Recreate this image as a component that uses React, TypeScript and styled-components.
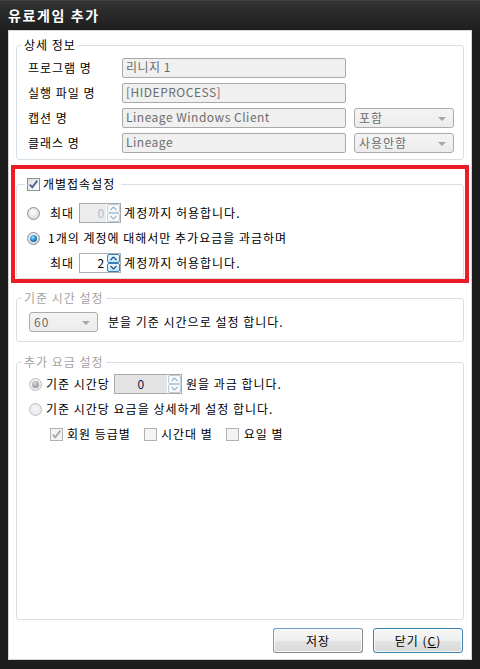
import React from "react";
import styled, { createGlobalStyle, css } from "styled-components";

const FONT = `"Noto Sans CJK KR", "Liberation Sans", sans-serif`;

const GlobalStyle = createGlobalStyle`
  * { box-sizing: border-box; }
  html, body { margin: 0; padding: 0; background: #1d1d1d; }
  body { font-family: ${FONT}; font-size: 12px; color: #000; letter-spacing: 1px; }
`;

const Window = styled.div`
  width: 480px;
  height: 669px;
  display: flex;
  flex-direction: column;
  background: #1d1d1d;
`;

const TitleBar = styled.div`
  flex: none;
  height: 30px;
  display: flex;
  align-items: center;
  padding-left: 8px;
  background: linear-gradient(#505050 0, #353535 1px, #2a2a2a 40%, #1e1e1e 100%);
  color: #fff;
  font-size: 14px;
  font-weight: bold;
  line-height: 16px;
  letter-spacing: 1.6px;
`;

const Client = styled.div`
  flex: 1;
  margin: 0 8px 9px;
  background: #fff;
  border: 1px solid #d4d4d4;
  display: flex;
  flex-direction: column;
`;

const Group = styled.fieldset<{ $mt?: number; $mx?: number; $grow?: boolean }>`
  margin: ${(p) => p.$mt ?? 0}px ${(p) => p.$mx ?? 7}px 0;
  padding: 0;
  min-width: 0;
  border: 1px solid #d5dfe5;
  border-radius: 3px;
  ${(p) =>
    p.$grow &&
    css`
      flex: 1;
    `}
`;

const Legend = styled.legend<{ $ml?: number; $disabled?: boolean }>`
  margin-left: ${(p) => p.$ml ?? 5}px;
  padding: 0 2px 0 2px;
  height: 14px;
  line-height: 14px;
  font-size: 12px;
  color: ${(p) => (p.$disabled ? "#a3a3a3" : "#000")};
`;

const LegendInner = styled.span`
  display: inline-flex;
  align-items: center;
  gap: 3px;
  height: 14px;
  padding-right: 4px;
`;

const Body = styled.div<{ $pt: number; $pb: number; $pl: number }>`
  padding: ${(p) => p.$pt}px 8px ${(p) => p.$pb}px ${(p) => p.$pl}px;
  display: flex;
  flex-direction: column;
  gap: 5px;
`;

const FormGrid = styled.div`
  padding: 6px 0 6px 11px;
  display: grid;
  grid-template-columns: 86px 224px 100px;
  grid-auto-rows: 20px;
  column-gap: 8px;
  row-gap: 5px;
`;

const Label = styled.div`
  line-height: 20px;
  white-space: nowrap;
`;

const TextBox = styled.div`
  height: 20px;
  border: 1px solid #a9a9a9;
  border-radius: 2px;
  background: #f0f0f0;
  color: #6d6d6d;
  padding: 0 3px;
  line-height: 16px;
  letter-spacing: 0.5px;
  white-space: nowrap;
  overflow: hidden;
`;

const Combo = styled.div<{ $w?: number }>`
  width: ${(p) => (p.$w ? `${p.$w}px` : "auto")};
  height: 20px;
  border: 1px solid #acacac;
  border-radius: 3px;
  background: linear-gradient(#f4f4f4, #ececec);
  color: #6d6d6d;
  display: flex;
  align-items: center;
  justify-content: space-between;
  padding: 0 7px 0 4px;
  line-height: 16px;
  flex: none;
`;

const Arrow = styled.span`
  width: 0;
  height: 0;
  border-left: 4px solid transparent;
  border-right: 4px solid transparent;
  border-top: 4px solid #a6a6a6;
  margin-top: 2px;
`;

const RedFrame = styled.div`
  margin: 5px 2px 0;
  border: 4px solid #ed1c24;
  padding: 8px 1px 0;
`;

const Row = styled.div<{ $indent?: number }>`
  display: flex;
  align-items: center;
  height: 20px;
  padding-left: ${(p) => p.$indent ?? 0}px;
  white-space: nowrap;
`;

const Text = styled.span<{ $ml?: number; $mr?: number }>`
  margin-left: ${(p) => p.$ml ?? 0}px;
  margin-right: ${(p) => p.$mr ?? 0}px;
  line-height: 14px;
`;

const Radio = styled.span<{ $checked?: boolean; $disabled?: boolean }>`
  flex: none;
  position: relative;
  width: 13px;
  height: 13px;
  border-radius: 50%;
  border: 1px solid ${(p) => (p.$disabled ? "#c0c0c0" : "#8e8f8f")};
  background: ${(p) =>
    p.$disabled
      ? "radial-gradient(circle at 50% 45%, #f6f6f6 0, #e4e4e4 100%)"
      : "radial-gradient(circle at 45% 40%, #ffffff 0, #eeeeee 35%, #c9c9c9 100%)"};
  ${(p) =>
    p.$checked &&
    css`
      &::after {
        content: "";
        position: absolute;
        left: 2px;
        top: 2px;
        width: 7px;
        height: 7px;
        border-radius: 50%;
        background: ${p.$disabled
          ? "radial-gradient(circle at 40% 35%, #d8d8d8 0, #9a9a9a 70%, #7a7a7a 100%)"
          : "radial-gradient(circle at 40% 35%, #9be6ff 0, #2a8ad4 45%, #0b3d73 100%)"};
      }
    `}
`;

const CheckBoxBox = styled.span<{ $disabled?: boolean }>`
  flex: none;
  width: 13px;
  height: 13px;
  border: 1px solid ${(p) => (p.$disabled ? "#b1b1b1" : "#8e8f8f")};
  background: ${(p) =>
    p.$disabled ? "#f4f4f4" : "linear-gradient(135deg, #dcdcdc, #ffffff)"};
  display: flex;
  align-items: center;
  justify-content: center;
`;

const CheckBox = ({ checked, disabled }: { checked?: boolean; disabled?: boolean }) => (
  <CheckBoxBox $disabled={disabled}>
    {checked && (
      <svg width="11" height="11" viewBox="0 0 11 11">
        <path
          d="M1.8 5.6 L4.3 8.3 L9.3 1.6"
          fill="none"
          stroke={disabled ? "#a8a8a8" : "#4a5f97"}
          strokeWidth="1.8"
        />
      </svg>
    )}
  </CheckBoxBox>
);

const SpinBox = styled.div<{ $w: number; $tone: "off" | "on" | "grey" }>`
  flex: none;
  width: ${(p) => p.$w}px;
  height: 20px;
  display: flex;
  border: 1px solid ${(p) => (p.$tone === "on" ? "#abadb3" : "#a9a9a9")};
  background: ${(p) => (p.$tone === "on" ? "#fff" : p.$tone === "grey" ? "#e3e3e3" : "#ececec")};
`;

const SpinValue = styled.div<{ $color: string; $center?: boolean }>`
  flex: 1;
  color: ${(p) => p.$color};
  line-height: 18px;
  letter-spacing: 0;
  text-align: ${(p) => (p.$center ? "center" : "right")};
  padding-right: ${(p) => (p.$center ? 0 : 2)}px;
`;

const SpinButtons = styled.div`
  width: 14px;
  display: flex;
  flex-direction: column;
  padding: 0 0 0 1px;
  background: #fff;
`;

const SpinBtn = styled.div<{ $on?: boolean }>`
  flex: 1;
  border: 1px solid ${(p) => (p.$on ? "#3c7fb1" : "#b7cde2")};
  border-radius: 2px;
  background: ${(p) => (p.$on ? "linear-gradient(#eaf6fd, #bee6fd)" : "#f7f9fb")};
  display: flex;
  align-items: center;
  justify-content: center;
`;

const Chevron = ({ up, color }: { up?: boolean; color: string }) => (
  <svg width="7" height="5" viewBox="0 0 7 5">
    <path
      d={up ? "M0.5 4 L3.5 1 L6.5 4" : "M0.5 1 L3.5 4 L6.5 1"}
      fill="none"
      stroke={color}
      strokeWidth="1.2"
    />
  </svg>
);

const Spinner = ({
  w,
  value,
  tone,
  valueColor,
  center,
}: {
  w: number;
  value: string;
  tone: "off" | "on" | "grey";
  valueColor: string;
  center?: boolean;
}) => (
  <SpinBox $w={w} $tone={tone}>
    <SpinValue $color={valueColor} $center={center}>
      {value}
    </SpinValue>
    <SpinButtons>
      <SpinBtn $on={tone === "on"}>
        <Chevron up color={tone === "on" ? "#1c5180" : "#9fb6cc"} />
      </SpinBtn>
      <SpinBtn $on={tone === "on"}>
        <Chevron color={tone === "on" ? "#1c5180" : "#9fb6cc"} />
      </SpinBtn>
    </SpinButtons>
  </SpinBox>
);

const ButtonBar = styled.div`
  display: flex;
  justify-content: flex-end;
  gap: 10px;
  margin: 8px 0 6px;
  padding-right: 8px;
`;

const Button = styled.button<{ $default?: boolean }>`
  width: 90px;
  height: 25px;
  padding: 0;
  border: 1px solid;
  border-color: ${(p) =>
    p.$default ? "#3c7fb1" : "#6f9cc6 #8a8a8a #8a8a8a #6f9cc6"};
  border-radius: 3px;
  background: linear-gradient(#f6f6f6 0%, #efefef 50%, #e3e3e3 51%, #d9d9d9 100%);
  box-shadow: inset 0 0 0 1px rgba(255, 255, 255, 0.8);
  font-family: ${FONT};
  font-size: 12px;
  letter-spacing: 1px;
  color: #000;
  line-height: 14px;
`;

export default function App() {
  return (
    <>
      <GlobalStyle />
      <Window>
        <TitleBar>유료게임 추가</TitleBar>
        <Client>
          <Group $mt={7}>
            <Legend>상세 정보</Legend>
            <FormGrid>
              <Label>프로그램 명</Label>
              <TextBox>리니지 1</TextBox>
              <span />
              <Label>실행 파일 명</Label>
              <TextBox>[HIDEPROCESS]</TextBox>
              <span />
              <Label>캡션 명</Label>
              <TextBox>Lineage Windows Client</TextBox>
              <Combo>
                포함
                <Arrow />
              </Combo>
              <Label>클래스 명</Label>
              <TextBox>Lineage</TextBox>
              <Combo>
                사용안함
                <Arrow />
              </Combo>
            </FormGrid>
          </Group>

          <RedFrame>
            <Group $mx={0}>
              <Legend $ml={8}>
                <LegendInner>
                  <CheckBox checked />
                  개별접속설정
                </LegendInner>
              </Legend>
              <Body $pt={12} $pb={5} $pl={10}>
                <Row>
                  <Radio />
                  <Text $ml={10} $mr={5}>
                    최대
                  </Text>
                  <Spinner w={42} value="0" tone="off" valueColor="#a9bdd0" />
                  <Text $ml={3}>계정까지 허용합니다.</Text>
                </Row>
                <Row>
                  <Radio $checked />
                  <Text $ml={8}>1개의 계정에 대해서만 추가요금을 과금하며</Text>
                </Row>
                <Row $indent={23}>
                  <Text $mr={5}>최대</Text>
                  <Spinner w={42} value="2" tone="on" valueColor="#000" />
                  <Text $ml={3}>계정까지 허용합니다.</Text>
                </Row>
              </Body>
            </Group>
          </RedFrame>

          <Group $mt={8}>
            <Legend $disabled>기준 시간 설정</Legend>
            <Body $pt={7} $pb={9} $pl={12}>
              <Row>
                <Combo $w={69}>
                  60
                  <Arrow />
                </Combo>
                <Text $ml={10}>분을 기준 시간으로 설정 합니다.</Text>
              </Row>
            </Body>
          </Group>

          <Group $mt={13} $grow>
            <Legend $disabled>추가 요금 설정</Legend>
            <Body $pt={5} $pb={9} $pl={12}>
              <Row>
                <Radio $checked $disabled />
                <Text $ml={4} $mr={4}>
                  기준 시간당
                </Text>
                <Spinner w={68} value="0" tone="grey" valueColor="#0a1a4a" center />
                <Text $ml={4}>원을 과금 합니다.</Text>
              </Row>
              <Row>
                <Radio $disabled />
                <Text $ml={4}>기준 시간당 요금을 상세하게 설정 합니다.</Text>
              </Row>
              <Row $indent={21}>
                <CheckBox checked disabled />
                <Text $ml={4} $mr={13}>
                  회원 등급별
                </Text>
                <CheckBox disabled />
                <Text $ml={4} $mr={13}>
                  시간대 별
                </Text>
                <CheckBox disabled />
                <Text $ml={5}>요일 별</Text>
              </Row>
            </Body>
          </Group>

          <ButtonBar>
            <Button>저장</Button>
            <Button $default>
              닫기 (<u>C</u>)
            </Button>
          </ButtonBar>
        </Client>
      </Window>
    </>
  );
}
